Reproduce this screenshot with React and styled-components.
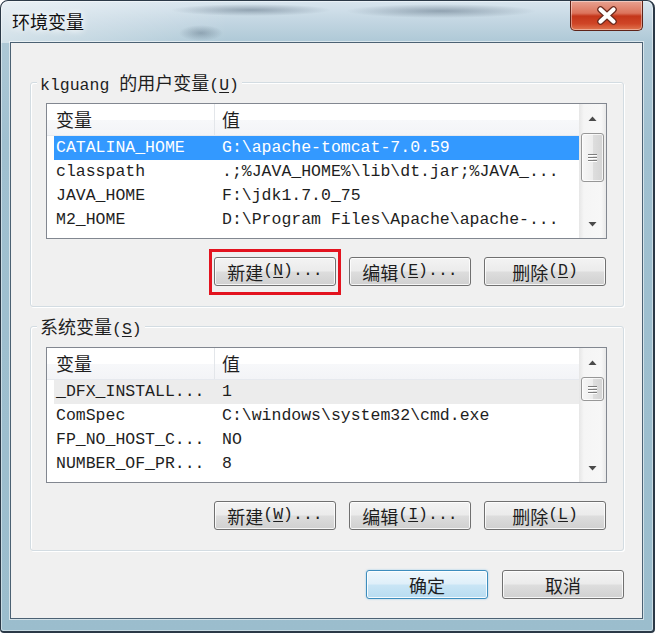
import React from 'react';
import styled, { createGlobalStyle } from 'styled-components';

const Global = createGlobalStyle`
  html, body { margin: 0; padding: 0; background: #ffffff; }
  body {
    font-family: "Liberation Mono", "Noto Sans CJK SC", monospace;
    font-size: 16.5px;
    color: #1e1e1e;
  }
`;

const Window = styled.div`
  box-sizing: border-box;
  width: 655px;
  height: 633px;
  display: flex;
  flex-direction: column;
  border: 1px solid #2b3947;
  border-right-width: 2px;
  border-bottom-width: 2px;
  border-radius: 8px 8px 4px 4px;
  padding: 0 10px 12px 9px;
  background:
    radial-gradient(ellipse 80px 6px at 250px 9px, rgba(55, 75, 95, 0.4), rgba(55, 75, 95, 0) 100%),
    radial-gradient(ellipse 95px 7px at 440px 10px, rgba(55, 75, 95, 0.4), rgba(55, 75, 95, 0) 100%),
    radial-gradient(ellipse 22px 8px at 200px 32px, rgba(50, 70, 90, 0.32), rgba(50, 70, 90, 0) 100%),
    linear-gradient(90deg, rgba(255, 255, 255, 0.45), rgba(255, 255, 255, 0) 35%) 0 0 / 100% 42px no-repeat,
    linear-gradient(180deg, #d8e5ee 0px, #c3d6e2 20px, #adc8d6 42px, #a0c0d0 140px, #9bbdcd 100%);
  box-shadow: inset 0 0 0 1px rgba(255, 255, 255, 0.45);
`;

const TitleBar = styled.div`
  flex: none;
  height: 41px;
  display: flex;
  justify-content: space-between;
  align-items: flex-start;
`;

const Title = styled.div`
  margin: 8px 0 0 2px;
  font-family: "Noto Sans CJK SC", sans-serif;
  font-size: 18px;
  line-height: 24px;
  color: #111;
  text-shadow: 0 0 6px rgba(255, 255, 255, 0.95), 0 0 10px rgba(255, 255, 255, 0.8);
`;

const CloseButton = styled.div`
  box-sizing: border-box;
  width: 73px;
  height: 30px;
  display: flex;
  align-items: center;
  justify-content: center;
  border: 1px solid #5e2318;
  border-top: none;
  border-radius: 0 0 5px 5px;
  background: linear-gradient(180deg, #e8a291 0%, #dc735b 42%, #c4361a 52%, #cf4526 78%, #e07650 100%);
  box-shadow: inset 0 0 0 1px rgba(255, 255, 255, 0.4);
`;

const Content = styled.div`
  flex: 1;
  display: flex;
  flex-direction: column;
  border: 1px solid #4b6173;
  background: #f0f0f0;
  padding: 28px 18px 0 19px;
  box-shadow: 0 0 0 1px rgba(255, 255, 255, 0.55);
`;

const Group = styled.fieldset`
  margin: ${p => (p.$second ? '8px 0 0 0' : '0')};
  padding: 0;
  min-width: 0;
  border: 1px solid #d3dce2;
  border-radius: 3px;
  box-shadow: inset 1px 1px 0 #ffffff, 1px 1px 0 #ffffff;
`;

const Legend = styled.legend`
  box-sizing: border-box;
  height: 22px;
  margin-left: 6px;
  padding: 0 3px;
  line-height: 22px;
  background: #f0f0f0;
  white-space: pre;
`;

const Han = styled.span`
  font-family: "Noto Sans CJK SC", sans-serif;
  font-size: 18px;
`;

const Ul = styled.span`
  text-decoration: underline;
  text-underline-offset: 2px;
`;

const GroupBody = styled.div`
  padding: 10px 16px 20px 15px;
  display: flex;
  flex-direction: column;
  gap: 18px;
`;

const ListView = styled.div`
  box-sizing: border-box;
  width: 561px;
  height: 136px;
  display: flex;
  border: 1px solid #828790;
  background: #ffffff;
  overflow: hidden;
`;

const ListMain = styled.div`
  flex: 1;
  display: flex;
  flex-direction: column;
  overflow: hidden;
`;

const Header = styled.div`
  flex: none;
  height: 31px;
  display: flex;
  border-bottom: 1px solid #e6e9ee;
  background: linear-gradient(180deg, #ffffff 0%, #ffffff 50%, #f7f8fa 51%, #f3f4f7 100%);
`;

const HeaderCell = styled.div`
  box-sizing: border-box;
  ${p => (p.$w ? `width: ${p.$w}px; border-right: 1px solid #e3e6ea;` : 'flex: 1;')}
  padding-left: ${p => p.$pad}px;
  font-family: "Noto Sans CJK SC", sans-serif;
  font-size: 18px;
  line-height: 31px;
  color: #1e1e1e;
`;

const Row = styled.div`
  height: 24px;
  margin-left: 7px;
  display: flex;
  line-height: 24px;
  white-space: pre;
  background: ${p => (p.$sel === 'focus' ? '#3399ff' : p.$sel === 'blur' ? '#ececec' : 'transparent')};
  color: ${p => (p.$sel === 'focus' ? '#ffffff' : '#1e1e1e')};
`;

const Cell = styled.div`
  box-sizing: border-box;
  ${p => (p.$w ? `width: ${p.$w}px;` : 'flex: 1;')}
  padding-left: ${p => p.$pad}px;
  overflow: hidden;
`;

const ScrollBar = styled.div`
  flex: none;
  width: 27px;
  display: flex;
  flex-direction: column;
  background: linear-gradient(90deg, #e6e6e6 0%, #f5f5f5 18%, #f7f7f7 82%, #e9e9e9 100%);
`;

const ArrowBtn = styled.div`
  flex: none;
  height: 29px;
  display: flex;
  align-items: center;
  justify-content: center;
`;

const Track = styled.div`
  flex: 1;
  display: flex;
  flex-direction: column;
`;

const Thumb = styled.div`
  box-sizing: border-box;
  height: ${p => p.$h}px;
  margin: 0 2px;
  border: 1px solid #979797;
  border-radius: 3px;
  background: linear-gradient(90deg, #f7f7f7 0%, #ededed 50%, #dedede 51%, #d4d4d4 100%);
  box-shadow: inset 0 0 0 1px rgba(255, 255, 255, 0.75);
  display: flex;
  flex-direction: column;
  align-items: center;
  justify-content: center;
  gap: 2px;
`;

const Grip = styled.div`
  width: 9px;
  height: 1px;
  background: #7d7d7d;
  box-shadow: 0 1px 0 #ffffff;
`;

const ButtonRow = styled.div`
  display: flex;
  justify-content: flex-end;
  gap: 13px;
  padding-right: 1px;
`;

const Btn = styled.div`
  box-sizing: border-box;
  width: ${p => p.$w || 122}px;
  height: 29px;
  display: flex;
  align-items: center;
  justify-content: center;
  border: 1px solid ${p => (p.$default ? '#3d8dbd' : '#707070')};
  border-radius: 3px;
  background: ${p =>
    p.$default
      ? 'linear-gradient(180deg, #eef7fc 0%, #dfeff9 48%, #c9e5f5 52%, #b8dcf1 100%)'
      : 'linear-gradient(180deg, #f3f3f3 0%, #ebebeb 48%, #dddddd 52%, #d0d0d0 100%)'};
  box-shadow: ${p =>
    p.$default
      ? 'inset 0 0 0 1px rgba(255,255,255,0.85), 0 0 2px rgba(80,170,230,0.6)'
      : 'inset 0 0 0 1px rgba(255,255,255,0.8)'};
  white-space: pre;
  line-height: 1;
  color: #1e1e1e;
`;

const Marked = styled.div`
  position: relative;
  &::after {
    content: '';
    position: absolute;
    inset: -8px -5px -9px -5px;
    border: 3px solid #e3131f;
    pointer-events: none;
  }
`;

const Footer = styled.div`
  display: flex;
  justify-content: flex-end;
  gap: 14px;
  margin-top: 19px;
`;

const ArrowIcon = ({ down }) => (
  <svg width="9" height="6" viewBox="0 0 9 6">
    <polygon points={down ? '0.5,1 8.5,1 4.5,5.5' : '0.5,5 8.5,5 4.5,0.5'} fill="#4a4a4a" />
  </svg>
);

const Mixed = ({ text }) =>
  text.split(/([\u3400-\u9fff]+)/).map((p, i) =>
    /[\u3400-\u9fff]/.test(p) ? <Han key={i}>{p}</Han> : <React.Fragment key={i}>{p}</React.Fragment>
  );

const List = ({ rows, sel, thumb }) => (
  <ListView>
    <ListMain>
      <Header>
        <HeaderCell $w={168} $pad={9}>变量</HeaderCell>
        <HeaderCell $pad={7}>值</HeaderCell>
      </Header>
      {rows.map((r, i) => (
        <Row key={r[0]} $sel={i === 0 ? sel : undefined}>
          <Cell $w={161} $pad={2}>{r[0]}</Cell>
          <Cell $pad={7}>{r[1]}</Cell>
        </Row>
      ))}
    </ListMain>
    <ScrollBar>
      <ArrowBtn><ArrowIcon /></ArrowBtn>
      <Track>
        <Thumb $h={thumb}>
          <Grip />
          <Grip />
          <Grip />
        </Thumb>
      </Track>
      <ArrowBtn><ArrowIcon down /></ArrowBtn>
    </ScrollBar>
  </ListView>
);

const userRows = [
  ['CATALINA_HOME', 'G:\\apache-tomcat-7.0.59'],
  ['classpath', '.;%JAVA_HOME%\\lib\\dt.jar;%JAVA_...'],
  ['JAVA_HOME', 'F:\\jdk1.7.0_75'],
  ['M2_HOME', 'D:\\Program Files\\Apache\\apache-...'],
];

const sysRows = [
  ['_DFX_INSTALL...', '1'],
  ['ComSpec', 'C:\\windows\\system32\\cmd.exe'],
  ['FP_NO_HOST_C...', 'NO'],
  ['NUMBER_OF_PR...', '8'],
];

const BtnLabel = ({ han, key1, dots }) => (
  <>
    <Mixed text={han} />(<Ul>{key1}</Ul>){dots ? '...' : ''}
  </>
);

export default function App() {
  return (
    <>
      <Global />
      <Window>
        <TitleBar>
          <Title>环境变量</Title>
          <CloseButton>
            <svg width="26" height="19" viewBox="0 0 26 19">
              <path d="M6.5 3.5 L19.5 15.5 M19.5 3.5 L6.5 15.5" stroke="#6b2a1e" strokeWidth="6.6" strokeLinecap="round" />
              <path d="M6.5 3.5 L19.5 15.5 M19.5 3.5 L6.5 15.5" stroke="#ffffff" strokeWidth="4.2" strokeLinecap="round" />
            </svg>
          </CloseButton>
        </TitleBar>
        <Content>
          <Group>
            <Legend>
              klguang <Han>的用户变量</Han>(<Ul>U</Ul>)
            </Legend>
            <GroupBody>
              <List rows={userRows} sel="focus" thumb={49} />
              <ButtonRow>
                <Marked>
                  <Btn><BtnLabel han="新建" key1="N" dots /></Btn>
                </Marked>
                <Btn><BtnLabel han="编辑" key1="E" dots /></Btn>
                <Btn><BtnLabel han="删除" key1="D" /></Btn>
              </ButtonRow>
            </GroupBody>
          </Group>
          <Group $second>
            <Legend>
              <Han>系统变量</Han>(<Ul>S</Ul>)
            </Legend>
            <GroupBody>
              <List rows={sysRows} sel="blur" thumb={24} />
              <ButtonRow>
                <Btn><BtnLabel han="新建" key1="W" dots /></Btn>
                <Btn><BtnLabel han="编辑" key1="I" dots /></Btn>
                <Btn><BtnLabel han="删除" key1="L" /></Btn>
              </ButtonRow>
            </GroupBody>
          </Group>
          <Footer>
            <Btn $default $w={122}><Han>确定</Han></Btn>
            <Btn $w={122}><Han>取消</Han></Btn>
          </Footer>
        </Content>
      </Window>
    </>
  );
}
